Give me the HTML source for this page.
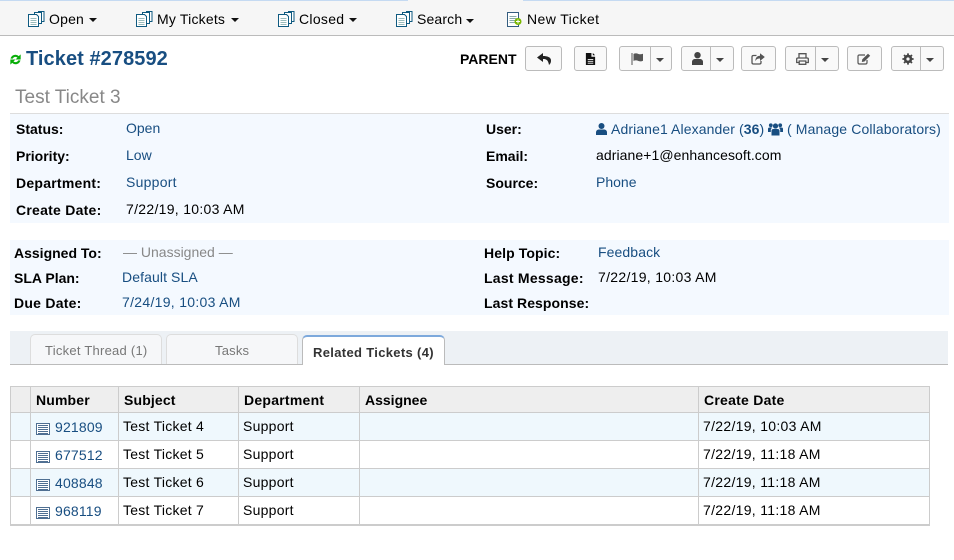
<!DOCTYPE html>
<html><head><meta charset="utf-8"><style>
html,body{margin:0;padding:0;background:#fff}
body{width:954px;height:560px;position:relative;overflow:hidden;font-family:"Liberation Sans",sans-serif;font-size:14px;color:#000}
.t{position:absolute;line-height:16px;white-space:nowrap}
.b{font-weight:bold}
.l{color:#184e81}
.d{letter-spacing:.3px}
.s{letter-spacing:.25px}
.r{position:absolute}
svg{position:absolute;overflow:visible}
.btn{position:absolute;top:46px;height:25px;box-sizing:border-box;border:1px solid #bbb;border-radius:3px;background:#f9f9f9}
.sep{position:absolute;top:0;bottom:0;width:1px;background:#bbb}
.car{position:absolute;top:11px;width:0;height:0;border-left:4px solid transparent;border-right:4px solid transparent;border-top:4px solid #444}
.nc{position:absolute;top:18px;width:0;height:0;border-left:4px solid transparent;border-right:4px solid transparent;border-top:4px solid #111}
.v{position:absolute;width:1px;background:#ccc;top:386px;height:139px}
.h{position:absolute;height:1px;background:#ccc;left:10px;width:920px}
</style></head><body>
<div class="r" style="left:0;top:0;width:954px;height:36px;background:#f6f6f6;border-bottom:1px solid #bbb;box-sizing:border-box"></div>
<div class="r" style="left:0;top:0;width:408px;height:1px;background:#c5daf2"></div>
<div class="r" style="left:523px;top:0;width:431px;height:1px;background:#c5daf2"></div>

<svg width="0" height="0" style="left:0;top:0"><defs>
<g id="docs" fill="#fff" stroke="#0f5a80" stroke-width="1"><rect x="10.5" y=".5" width="5.500" height="10"/><rect x="6.500" y="1.500" width="7" height="11"/><path d="M.5 3.500h8l2 2v10h-10z"/><path d="M2.500 7.500h6M2.500 9.500h6M2.500 11.500h6M2.500 13.500h6" stroke="#9bb" /></g>
<g id="doc" fill="none" stroke="#345d80" stroke-width="1"><path d="M.5 .5h11v14h-11z" fill="#fff"/><path d="M2.500 4.500h7M2.500 6.500h7M2.500 8.500h7M2.500 10.500h7" stroke="#8aa"/></g>
<g id="lst" fill="none" stroke="#4f6f92" stroke-width="1"><path d="M.5 1.500h13v11h-13z" fill="#fff"/><path d="M2 3.500h10M2 5.500h10M2 7.500h10M2 9.500h10M2 11.500h10"/></g>
</defs></svg>

<svg style="left:28px;top:11px" width="17" height="16"><use href="#docs"/></svg>
<div class="t" style="left:49px;top:11px;letter-spacing:.2px">Open</div><div class="nc" style="left:89px"></div>
<svg style="left:136px;top:11px" width="17" height="16"><use href="#docs"/></svg>
<div class="t" style="left:157px;top:11px;letter-spacing:.2px">My Tickets</div><div class="nc" style="left:231px"></div>
<svg style="left:278px;top:11px" width="17" height="16"><use href="#docs"/></svg>
<div class="t" style="left:299px;top:11px;letter-spacing:.3px">Closed</div><div class="nc" style="left:349px"></div>
<svg style="left:396px;top:11px" width="17" height="16"><use href="#docs"/></svg>
<div class="t" style="left:417px;top:11px;letter-spacing:.15px">Search</div><div class="nc" style="left:466px;top:19px;border-left-width:4.500px;border-right-width:4.500px"></div>
<svg style="left:507px;top:12px" width="14" height="15"><use href="#doc"/><circle cx="11" cy="9.500" r="3.500" fill="#7ab800"/><path d="M9 9.500h4M11 7.500v4" stroke="#fff" stroke-width="1"/></svg>
<div class="t" style="left:527px;top:11px;letter-spacing:.4px">New Ticket</div>

<svg style="left:10px;top:53.500px" width="11" height="11" viewBox="0 0 10 10"><path d="M.5 4.200A4.500 4.500 0 0 1 8 1.900L9.700 .3V5H5L6.800 3.300A2.700 2.700 0 0 0 2.500 4.200ZM9.500 5.800A4.500 4.500 0 0 1 2 8.100L.3 9.700V5H5L3.200 6.700A2.700 2.700 0 0 0 7.500 5.800Z" fill="#07ad07"/></svg>
<div class="t b" style="left:26px;top:48px;font-size:20px;line-height:23px;color:#184e81;letter-spacing:.07px">Ticket #278592</div>
<div class="t" style="left:15px;top:86px;font-size:19px;line-height:23px;color:#888">Test Ticket 3</div>

<div class="t b" style="left:460px;top:51px">PARENT</div>
<div class="btn" style="left:525px;width:37px"><svg style="left:11px;top:6px" width="15" height="12" viewBox="0 0 15 12"><path d="M6 0 0 4.500 6 9V6c3 0 5 .5 6 6 1.500-1.500 2-2.500 2-4.500C14 4 10 3 6 3Z" fill="#222"/></svg></div>
<div class="btn" style="left:574px;width:33px"><svg style="left:10px;top:6px" width="11" height="12" viewBox="0 0 11 13"><path d="M.5 0H6.500V4H10.500V13H.5ZM8 0 10.500 2.500H8ZM2.500 6.500V7.500H8.500V6.500ZM2.500 8.500V9.500H8.500V8.500ZM2.500 10.500V11.500H8.500V10.500Z" fill="#111" fill-rule="evenodd"/></svg></div>
<div class="btn" style="left:619px;width:53px"><svg style="left:11px;top:6px" width="13" height="12" viewBox="0 0 13 12"><path d="M.5 0h1v12h-1zM2.500 1c2-1 3.500-.5 5 0s3 .3 4.500-.3v7c-1.500.8-3 .8-4.500.3s-3-1-5 0z" fill="#555"/></svg><div class="sep" style="left:30px"></div><div class="car" style="left:36px"></div></div>
<div class="btn" style="left:681px;width:53px"><svg style="left:10px;top:5px" width="11" height="13" viewBox="0 0 11 13"><circle cx="5.500" cy="3.200" r="3.200" fill="#444"/><path d="M0 13V10C0 8 1.500 7 3 7h5c1.500 0 3 1 3 3V13Z" fill="#444"/></svg><div class="sep" style="left:28px"></div><div class="car" style="left:34px"></div></div>
<div class="btn" style="left:741px;width:35px"><svg style="left:9px;top:6px" width="14" height="12" viewBox="0 0 14 12"><path d="M9 .2V2.700C6 2.700 4.300 5 4.300 8.200 5.300 6 7 5.500 9 5.500V8L13.800 4Z" fill="#555"/><path d="M5.500 2.500H2.500Q1 2.500 1 4V9.500Q1 11 2.500 11H8.500Q10 11 10 9.500V8" fill="none" stroke="#555" stroke-width="1.300"/></svg></div>
<div class="btn" style="left:785px;width:54px"><svg style="left:10px;top:6px" width="13" height="12" viewBox="0 0 13 12"><path d="M3 5V.7H10V5M3 9.500H.7V6Q.7 5 2 5H11Q12.300 5 12.300 6V9.500H10" fill="none" stroke="#555" stroke-width="1.300"/><path d="M3.200 8H9.800V11.300H3.200Z" fill="none" stroke="#555" stroke-width="1.300"/></svg><div class="sep" style="left:29px"></div><div class="car" style="left:35px"></div></div>
<div class="btn" style="left:847px;width:35px"><svg style="left:9px;top:6px" width="14" height="12" viewBox="0 0 14 12"><path d="M8 2H2.500Q1 2 1 3.500V9.500Q1 11 2.500 11H8.500Q10 11 10 9.500V7" fill="none" stroke="#555" stroke-width="1.200"/><path d="M11 .8 13.200 2.800 7.500 8.500 4.800 9 5.300 6.300Z" fill="#555"/></svg></div>
<div class="btn" style="left:891px;width:53px"><svg style="left:10px;top:6px" width="12" height="12" viewBox="0 0 12 12"><circle cx="6" cy="6" r="2.900" fill="none" stroke="#444" stroke-width="2.600"/><path d="M6 6V0M6 6V12M6 6H0M6 6H12M6 6 1.800 1.800M6 6 10.200 1.800M6 6 1.800 10.200M6 6 10.200 10.200" stroke="#444" stroke-width="1.800" stroke-dasharray="1.800 2.400 2 9" stroke-dashoffset="-3.800"/></svg><div class="sep" style="left:28px"></div><div class="car" style="left:34px"></div></div>

<div class="r" style="left:10px;top:113px;width:939px;height:110px;background:#f4f9ff;border-top:1px solid #ddd;box-sizing:border-box"></div>
<div class="r" style="left:10px;top:240px;width:939px;height:75px;background:#f4f9ff"></div>

<div class="t b" style="left:16px;top:121px">Status:</div><div class="t l" style="left:126px;top:120px">Open</div>
<div class="t b" style="left:16px;top:148px">Priority:</div><div class="t l" style="left:126px;top:147px">Low</div>
<div class="t b s" style="left:16px;top:175px">Department:</div><div class="t l s" style="left:126px;top:174px">Support</div>
<div class="t b s" style="left:16px;top:202px">Create Date:</div><div class="t d" style="left:126px;top:201px">7/22/19, 10:03 AM</div>

<div class="t b" style="left:486px;top:121px">User:</div>
<svg style="left:596px;top:123px" width="11" height="12" viewBox="0 0 11 12"><circle cx="5.500" cy="3" r="3" fill="#184e81"/><path d="M0 12V9.500C0 7.500 1.500 6.500 3 6.500h5c1.500 0 3 1 3 3V12Z" fill="#184e81"/></svg>
<div class="t l" style="left:611px;top:121px;letter-spacing:.1px">Adriane1 Alexander (<b>36</b>)</div>
<svg style="left:768px;top:122px" width="15" height="14" viewBox="0 0 15 13"><g fill="#184e81"><circle cx="7.500" cy="3.500" r="2.600"/><circle cx="2.800" cy="2.800" r="1.900"/><circle cx="12.200" cy="2.800" r="1.900"/><path d="M3.500 13V8.500Q3.500 6.500 5.500 6.500H9.500Q11.500 6.500 11.500 8.500V13ZM0 9.500V6.500Q0 5 1.500 5H4L2.800 7V9.500ZM15 9.500V6.500Q15 5 13.500 5H11L12.200 7V9.500Z"/></g></svg>
<div class="t l" style="left:787px;top:121px;letter-spacing:.13px">( Manage Collaborators)</div>
<div class="t b" style="left:486px;top:148px">Email:</div><div class="t" style="left:596px;top:147px;letter-spacing:.08px">adriane+1@enhancesoft.com</div>
<div class="t b" style="left:486px;top:175px">Source:</div><div class="t l" style="left:596px;top:174px">Phone</div>

<div class="t b" style="left:14px;top:245px">Assigned To:</div><div class="t" style="left:123px;top:244px;color:#888">— Unassigned —</div>
<div class="t b" style="left:14px;top:270px">SLA Plan:</div><div class="t l" style="left:122px;top:269px;letter-spacing:.1px">Default SLA</div>
<div class="t b s" style="left:14px;top:295px">Due Date:</div><div class="t l d" style="left:122px;top:294px">7/24/19, 10:03 AM</div>
<div class="t b" style="left:484px;top:245px;letter-spacing:.1px">Help Topic:</div><div class="t l" style="left:598px;top:244px;letter-spacing:.1px">Feedback</div>
<div class="t b s" style="left:484px;top:270px">Last Message:</div><div class="t d" style="left:598px;top:269px">7/22/19, 10:03 AM</div>
<div class="t b" style="left:484px;top:295px;letter-spacing:.07px">Last Response:</div>

<div class="r" style="left:10px;top:331px;width:938px;height:34px;background:#edf1f5;border-bottom:1px solid #bbb;box-sizing:border-box"></div>
<div class="r" style="left:30px;top:334px;width:132px;height:30px;box-sizing:border-box;background:#f6f7f9;border:1px solid #ddd;border-bottom:0;border-radius:5px 5px 0 0"></div>
<div class="t s" style="left:45px;top:343px;font-size:13px;color:#777">Ticket Thread (1)</div>
<div class="r" style="left:166px;top:334px;width:132px;height:30px;box-sizing:border-box;background:#f6f7f9;border:1px solid #ddd;border-bottom:0;border-radius:5px 5px 0 0"></div>
<div class="t" style="left:215px;top:343px;font-size:13px;color:#777;letter-spacing:.2px">Tasks</div>
<div class="r" style="left:302px;top:335px;width:143px;height:30px;box-sizing:border-box;background:#fff;border:1px solid #bbb;border-top:2px solid #7da9dc;border-bottom:0;border-radius:5px 5px 0 0"></div>
<div class="t b" style="left:313px;top:345px;font-size:13px;color:#333;letter-spacing:.33px">Related Tickets (4)</div>

<div class="r" style="left:10px;top:386px;width:920px;height:27px;background:#eee"></div>
<div class="r" style="left:10px;top:413px;width:920px;height:27px;background:#eff8fd"></div>
<div class="r" style="left:10px;top:469px;width:920px;height:27px;background:#eff8fd"></div>
<div class="h" style="top:386px"></div><div class="h" style="top:412px"></div><div class="h" style="top:440px"></div><div class="h" style="top:468px"></div><div class="h" style="top:496px"></div><div class="h" style="top:524px;height:2px"></div>
<div class="v" style="left:10px"></div><div class="v" style="left:30px"></div><div class="v" style="left:118px"></div><div class="v" style="left:238px"></div><div class="v" style="left:359px"></div><div class="v" style="left:698px"></div><div class="v" style="left:929px"></div>

<div class="t b" style="left:36px;top:392px;letter-spacing:.15px">Number</div><div class="t b" style="left:124px;top:392px;letter-spacing:.15px">Subject</div><div class="t b s" style="left:244px;top:392px">Department</div><div class="t b" style="left:365px;top:392px">Assignee</div><div class="t b s" style="left:704px;top:392px">Create Date</div>

<svg style="left:36px;top:422px" width="14" height="13"><use href="#lst"/></svg><div class="t l" style="left:55px;top:419px;letter-spacing:.17px">921809</div><div class="t s" style="left:123px;top:418px">Test Ticket 4</div><div class="t s" style="left:243px;top:418px">Support</div><div class="t d" style="left:703px;top:418px">7/22/19, 10:03 AM</div>
<svg style="left:36px;top:450px" width="14" height="13"><use href="#lst"/></svg><div class="t l" style="left:55px;top:447px;letter-spacing:.17px">677512</div><div class="t s" style="left:123px;top:446px">Test Ticket 5</div><div class="t s" style="left:243px;top:446px">Support</div><div class="t d" style="left:703px;top:446px">7/22/19, 11:18 AM</div>
<svg style="left:36px;top:478px" width="14" height="13"><use href="#lst"/></svg><div class="t l" style="left:55px;top:475px;letter-spacing:.17px">408848</div><div class="t s" style="left:123px;top:474px">Test Ticket 6</div><div class="t s" style="left:243px;top:474px">Support</div><div class="t d" style="left:703px;top:474px">7/22/19, 11:18 AM</div>
<svg style="left:36px;top:506px" width="14" height="13"><use href="#lst"/></svg><div class="t l" style="left:55px;top:503px;letter-spacing:.17px">968119</div><div class="t s" style="left:123px;top:502px">Test Ticket 7</div><div class="t s" style="left:243px;top:502px">Support</div><div class="t d" style="left:703px;top:502px">7/22/19, 11:18 AM</div>
</body></html>
